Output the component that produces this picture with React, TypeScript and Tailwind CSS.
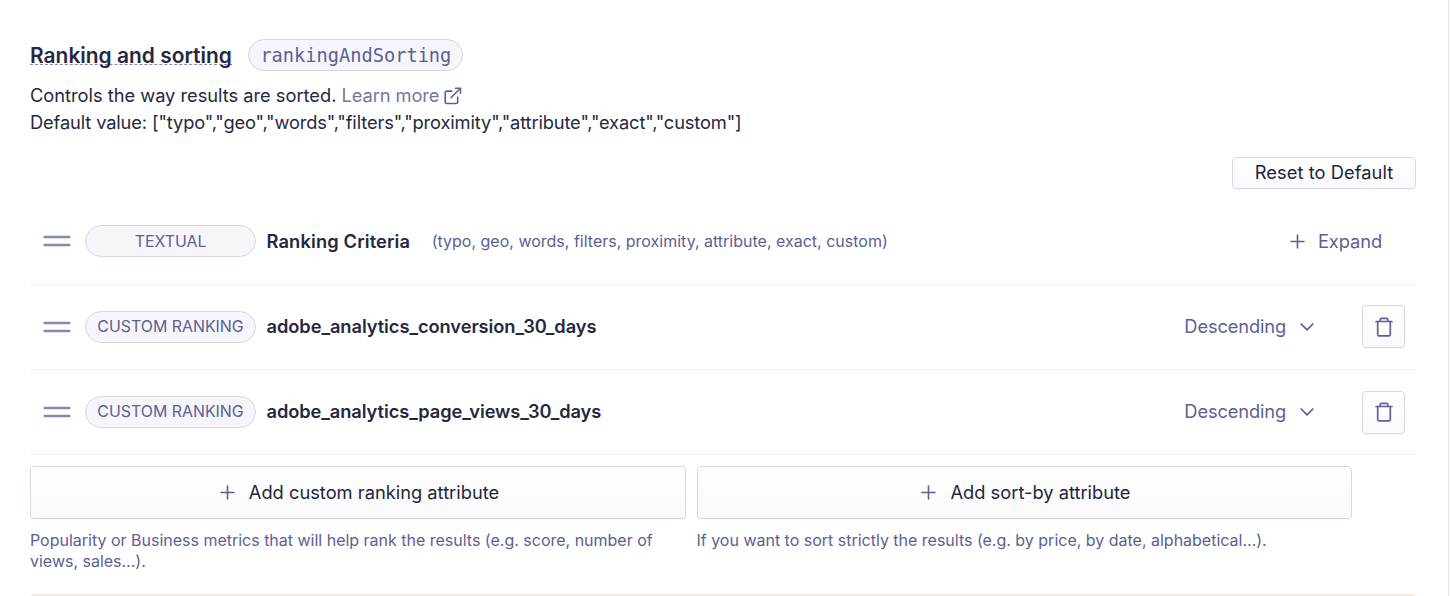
import { ReactNode } from "react";

function Plus() {
  return (
    <svg width="15" height="15" viewBox="0 0 15 15" fill="none" stroke="#5c6093" strokeWidth="1.6" strokeLinecap="round">
      <path d="M7.500 1v13M1 7.500h13" />
    </svg>
  );
}

function ExternalLink() {
  return (
    <svg width="18" height="18" viewBox="0 0 18 18" fill="none" stroke="#5c6093" strokeWidth="1.600" strokeLinecap="round" strokeLinejoin="round">
      <path d="M13.700 10v4.900a1.600 1.600 0 0 1-1.600 1.600H2.800a1.600 1.600 0 0 1-1.600-1.600V5.700a1.600 1.600 0 0 1 1.600-1.600h5M11.500 1.200h5v5M7 10.700l9.400-9.400" />
    </svg>
  );
}

function Chevron() {
  return (
    <svg width="14" height="8" viewBox="0 0 14 8" fill="none" stroke="#5c6093" strokeWidth="1.700" strokeLinecap="round" strokeLinejoin="round">
      <path d="M1.200 1L7 6.800 12.800 1" />
    </svg>
  );
}

function Trash() {
  return (
    <svg width="18" height="20" viewBox="0 0 18 20" fill="none" stroke="#5c6093" strokeWidth="1.700" strokeLinecap="round" strokeLinejoin="round">
      <path d="M1 4.500h16M2.700 4.500v13a1.400 1.400 0 0 0 1.400 1.400h9.800a1.400 1.400 0 0 0 1.400-1.400v-13M5.200 4.500V2.800a1.500 1.500 0 0 1 1.500-1.500h4.600a1.500 1.500 0 0 1 1.500 1.500v1.700" />
    </svg>
  );
}

function Handle() {
  return (
    <svg width="28" height="12" viewBox="0 0 28 12" fill="none" stroke="#8588b0" strokeWidth="2.400" strokeLinecap="round">
      <path d="M1.700 2h24.600M1.700 10h24.600" />
    </svg>
  );
}

function Row({ tag, name, tracking, children }: { tag: string; name: string; tracking: string; children: ReactNode }) {
  return (
    <div className="flex h-[85.300px] items-center border-b border-[#f1f1f6] pl-[13px]">
      <Handle />
      <span className="ml-[14px] flex h-8 w-[171px] items-center justify-center rounded-full border border-[#d6d6e7] bg-[#f5f5fa] text-[15.900px] text-[#5c6093]">
        {tag}
      </span>
      <span className={`relative ml-[10.500px] text-[18.300px] font-semibold text-[#26283f] ${tracking}`}>{name}</span>
      {children}
    </div>
  );
}

function RankingRow({ name, tracking }: { name: string; tracking: string }) {
  return (
    <Row tag="CUSTOM RANKING" name={name} tracking={tracking}>
      <div className="ml-auto flex items-center pr-[11px] text-[18.300px] text-[#5c6093]">
        <span className="tracking-[-0.140px]">Descending</span>
        <span className="ml-[14px]">
          <Chevron />
        </span>
        <button className="ml-[48px] flex size-[43px] items-center justify-center rounded-[4px] border border-[#d6d6e7] bg-linear-to-b from-white to-[#fafafd] shadow-[0_1px_0_rgba(35,38,59,0.03)]">
          <Trash />
        </button>
      </div>
    </Row>
  );
}

function AddAttribute({ label, help }: { label: string; help: string }) {
  return (
    <div>
      <button className="flex h-[53px] w-full items-center justify-center gap-[14px] rounded-[4px] border border-[#d6d6e7] bg-linear-to-b from-white to-[#fafafd] pt-px pl-[3.500px] text-[18.300px] text-[#23263b] shadow-[0_1px_0_rgba(35,38,59,0.03)]">
        <Plus />
        {label}
      </button>
      <p className="mt-[11px] text-[16px] leading-[21.300px] tracking-[-0.008px] text-[#5c6093]">{help}</p>
    </div>
  );
}

export default function App() {
  return (
    <main className="h-[596px] w-[1449px] overflow-hidden border-r border-[#e9e7ee] bg-white pt-[39px] pr-[32px] pl-[30px] font-['Inter',sans-serif]">
      <header className="flex h-8 items-center">
        <h2 className="-mt-px h-[21px] border-b border-dashed border-[#8487b5] text-[20.950px] leading-[26px] font-semibold text-[#26283f]">
          <span className="relative -top-px">Ranking and sorting</span>
        </h2>
        <code className="ml-[16.500px] flex h-8 w-[215px] items-center justify-center rounded-full border border-[#d6d6e7] bg-[#f5f5fa] pt-px font-['DejaVu_Sans_Mono',monospace] text-[18.670px] text-[#5c6093]">
          rankingAndSorting
        </code>
      </header>
      <div className="mt-[11px] text-[18.300px] leading-[27px] text-[#26283f]">
        <p className="flex items-center">
          <span className="tracking-[-0.020px]">Controls the way results are sorted.</span>
          <a className="ml-[5px] flex items-center gap-[5px] tracking-[-0.080px] text-[#7477a3]">
            Learn more
            <ExternalLink />
          </a>
        </p>
        <p className="tracking-[-0.135px]">
          Default value: ["typo","geo","words","filters","proximity","attribute","exact","custom"]
        </p>
      </div>
      <div className="mt-[21px] flex justify-end">
        <button className="h-8 w-[184px] rounded-[4px] border border-[#d6d6e7] bg-linear-to-b from-white to-[#fafafd] pb-[2px] text-[18.300px] leading-[28px] tracking-[0.050px] text-[#23263b] shadow-[0_1px_0_rgba(35,38,59,0.03)]">
          Reset to Default
        </button>
      </div>
      <section className="mt-[10.300px]">
        <Row tag="TEXTUAL" name="Ranking Criteria" tracking="tracking-[0.140px]">
          <span className="ml-[21.500px] text-[16px] text-[#5c6093]">
            (typo, geo, words, filters, proximity, attribute, exact, custom)
          </span>
          <span className="ml-auto flex items-center gap-[13px] pr-[34px] text-[18.300px] tracking-[-0.100px] text-[#5c6093]">
            <Plus />
            <span>Expand</span>
          </span>
        </Row>
        <RankingRow name="adobe_analytics_conversion_30_days" tracking="tracking-[-0.070px]" />
        <RankingRow name="adobe_analytics_page_views_30_days" tracking="tracking-[-0.085px]" />
      </section>
      <div className="mt-[10.800px] grid w-[1322px] grid-cols-2 gap-[11px]">
        <AddAttribute
          label="Add custom ranking attribute"
          help="Popularity or Business metrics that will help rank the results (e.g. score, number of views, sales…)."
        />
        <AddAttribute
          label="Add sort-by attribute"
          help="If you want to sort strictly the results (e.g. by price, by date, alphabetical…)."
        />
      </div>
      <div className="mt-[21.400px] h-4 rounded-t-[4px] border-t-2 border-[#f5e8df]" />
    </main>
  );
}
